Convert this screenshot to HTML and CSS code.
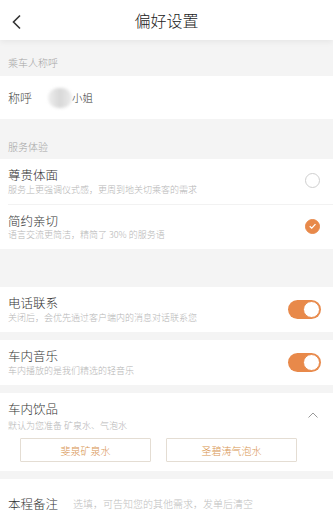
FILE: index.html
```html
<!DOCTYPE html>
<html lang="zh-CN">
<head>
<meta charset="utf-8">
<title>偏好设置</title>
<link rel="stylesheet" href="styles.css">
</head>
<body>
<div class="page">
  <header class="topbar">
    <svg class="back" width="12" height="16" viewBox="0 0 12 16"><path d="M9 1.5 L2.5 8 L9 14.5" fill="none" stroke="#333" stroke-width="1.6"/></svg>
    <h1 class="title">偏好设置</h1>
  </header>

  <div class="label label-first">乘车人称呼</div>
  <div class="row row-name">
    <span class="name-key">称呼</span>
    <span class="blur"></span>
    <span class="name-val">小姐</span>
  </div>

  <div class="label label-second">服务体验</div>
  <div class="group">
    <div class="item">
      <div class="texts">
        <div class="t">尊贵体面</div>
        <div class="s">服务上更强调仪式感，更周到地关切乘客的需求</div>
      </div>
      <span class="radio"></span>
    </div>
    <div class="divider"></div>
    <div class="item">
      <div class="texts">
        <div class="t">简约亲切</div>
        <div class="s">语言交流更简洁，精简了 30% 的服务语</div>
      </div>
      <span class="radio radio-on">
        <svg width="14" height="14" viewBox="0 0 14 14"><path d="M4 7.2 L6.2 9.3 L10.2 5" fill="none" stroke="#fff" stroke-width="1.4"/></svg>
      </span>
    </div>
  </div>

  <div class="spacer-big"></div>

  <div class="item card">
    <div class="texts">
      <div class="t">电话联系</div>
      <div class="s">关闭后，会优先通过客户端内的消息对话联系您</div>
    </div>
    <span class="toggle"><span class="knob"></span></span>
  </div>
  <div class="gap"></div>
  <div class="item card">
    <div class="texts">
      <div class="t">车内音乐</div>
      <div class="s">车内播放的是我们精选的轻音乐</div>
    </div>
    <span class="toggle"><span class="knob"></span></span>
  </div>
  <div class="gap"></div>

  <div class="drinks">
    <div class="item item-drinks">
      <div class="texts">
        <div class="t">车内饮品</div>
        <div class="s s-drinks">默认为您准备 矿泉水、气泡水</div>
      </div>
      <svg class="chev" width="12" height="8" viewBox="0 0 12 8"><path d="M1.5 6.5 L6 2 L10.5 6.5" fill="none" stroke="#999" stroke-width="1"/></svg>
    </div>
    <div class="btns">
      <span class="btn">斐泉矿泉水</span>
      <span class="btn">圣碧涛气泡水</span>
    </div>
  </div>
  <div class="gap"></div>

  <div class="row row-remark">
    <span class="remark-key">本程备注</span>
    <span class="remark-ph">选填，可告知您的其他需求，发单后清空</span>
  </div>
</div>
</body>
</html>
```

FILE: styles.css
```css
* { box-sizing: border-box; margin: 0; padding: 0; }
html, body { background: #f4f4f4; }
body {
  margin: 0;
  font-family: "Noto Sans CJK SC", "Noto Sans", sans-serif;
  font-weight: 300;
  color: #333;
  width: 333px;
  height: 525px;
  overflow: hidden;
}
.page { display: flex; flex-direction: column; }

.topbar {
  position: relative;
  height: 40px;
  background: #fff;
  display: flex;
  align-items: center;
  justify-content: center;
  box-shadow: 0 2px 6px rgba(0,0,0,0.06);
  z-index: 1;
}
.back { position: absolute; left: 11px; top: 14px; }
.title { font-size: 16px; font-weight: 300; color: #222; line-height: 20px; }

.label {
  font-size: 10px;
  line-height: 12px;
  color: #a5a5a5;
  padding: 0 8px;
}
.label-first { padding-top: 17px; padding-bottom: 7px; }
.label-second { padding-top: 22px; padding-bottom: 6px; }

.row {
  background: #fff;
  display: flex;
  align-items: center;
  padding: 0 8px;
}
.row-name { height: 43px; }
.name-key { font-size: 12px; color: #444; width: 40px; }
.blur {
  width: 24px;
  height: 20px;
  border-radius: 10px;
  background: linear-gradient(90deg, #eee, #d8d8d8 50%, #ececec);
  filter: blur(1.5px);
}
.name-val { font-size: 10.5px; color: #333; }

.group { background: #fff; }
.divider { height: 1px; background: #f2f2f2; margin-left: 8px; }

.item {
  display: flex;
  align-items: center;
  justify-content: space-between;
  padding: 8px 12px 9px 8px;
  background: #fff;
}
.texts { display: flex; flex-direction: column; }
.t { font-size: 12.5px; line-height: 15px; color: #333; }
.s { font-size: 9px; line-height: 11px; color: #b5b5b5; margin-top: 1.5px; }
.s-drinks { margin-top: 4px; }

.radio {
  width: 15px;
  height: 15px;
  border-radius: 50%;
  border: 1px solid #cfcfcf;
  margin-right: 1px;
  display: flex;
  align-items: center;
  justify-content: center;
}
.radio-on { background: #e8894a; border-color: #e8894a; }

.spacer-big { height: 38px; }
.gap { height: 8px; }
.card { height: 45px; }

.toggle {
  width: 33px;
  height: 19px;
  border-radius: 10px;
  background: #e8894a;
  display: flex;
  align-items: center;
  justify-content: flex-end;
  padding-right: 1px;
}
.knob {
  width: 17px;
  height: 17px;
  border-radius: 50%;
  background: #fff;
  border: 1px solid #e8894a;
}

.drinks { background: #fff; padding-bottom: 9px; }
.item-drinks { padding-bottom: 7px; padding-top: 8px; }
.chev { margin-right: 2px; margin-top: -2px; }
.btns {
  display: grid;
  grid-template-columns: 131px 131px;
  column-gap: 15px;
  padding-left: 20px;
}
.btn {
  height: 24px;
  border: 1px solid #e4ddd3;
  border-radius: 1px;
  display: flex;
  align-items: center;
  justify-content: center;
  font-size: 10px;
  color: #d8944f;
}

.row-remark { height: 48px; }
.remark-key { font-size: 12.5px; color: #333; width: 65px; }
.remark-ph { font-size: 10px; color: #c0c0c0; }
```
